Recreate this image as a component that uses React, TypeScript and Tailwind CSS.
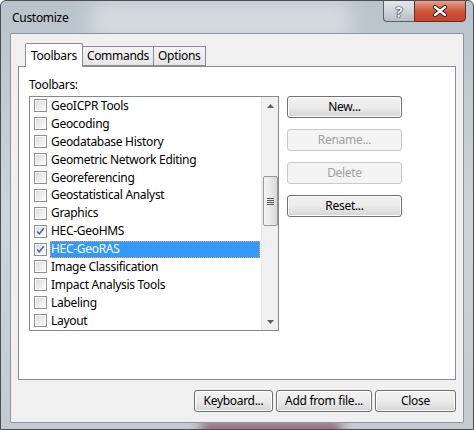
import React from 'react';

const FONT = { fontFamily: '"Noto Sans", "Open Sans", sans-serif' };

const items: { label: string; checked?: boolean; selected?: boolean }[] = [
  { label: 'GeoICPR Tools' },
  { label: 'Geocoding' },
  { label: 'Geodatabase History' },
  { label: 'Geometric Network Editing' },
  { label: 'Georeferencing' },
  { label: 'Geostatistical Analyst' },
  { label: 'Graphics' },
  { label: 'HEC-GeoHMS', checked: true },
  { label: 'HEC-GeoRAS', checked: true, selected: true },
  { label: 'Image Classification' },
  { label: 'Impact Analysis Tools' },
  { label: 'Labeling' },
  { label: 'Layout' },
];

const CheckBox: React.FC<{ checked?: boolean }> = ({ checked }) => (
  <div className="w-[13px] h-[13px] border border-[#8e8f8f] bg-white p-[1px] shrink-0">
    <div className="w-full h-full bg-gradient-to-br from-[#dcdcdc] to-[#fbfbfb] relative">
      {checked && (
        <svg viewBox="0 0 11 11" className="absolute inset-0 w-full h-full">
          <path d="M1.5 5.5 L4 8.5 L9.5 1.5" stroke="#4a5f97" strokeWidth="1.8" fill="none" />
        </svg>
      )}
    </div>
  </div>
);

const Button: React.FC<{ label: string; disabled?: boolean; className?: string }> = ({ label, disabled, className }) => (
  <div
    className={`h-[22px] flex items-center justify-center rounded-[3px] border text-[12px] tracking-[-0.3px] ${
      disabled
        ? 'border-[#c9c9c9] bg-[#f4f4f4] text-[#a0a0a0]'
        : 'border-[#707070] bg-gradient-to-b from-[#f2f2f2] via-[#ebebeb] to-[#d5d5d5] text-black shadow-[inset_0_0_0_1px_#fcfcfc]'
    } ${className ?? ''}`}
  >
    {label}
  </div>
);

export default function App() {
  return (
    <div
      className="w-[474px] h-[430px] relative overflow-hidden rounded-t-[6px] border border-[#4a4f55] bg-gradient-to-b from-[#b9c3cc] via-[#cdd4da] to-[#c3cbd2] tracking-[-0.3px]"
      style={FONT}
    >
      {/* glass sheen */}
      <div className="absolute left-[90px] top-0 w-[260px] h-[40px] bg-[#e6eaee] opacity-60 blur-[10px]" />
      <div className="absolute left-[200px] top-[420px] w-[140px] h-[20px] bg-[#8a3a5a] opacity-70 blur-[6px]" />

      {/* title bar */}
      <div className="relative h-[31px] flex items-start justify-between">
        <div className="pl-[11px] pt-[8px] text-[12px] text-black">Customize</div>
        <div className="flex mr-[7px] -mt-px">
          <div className="w-[31px] h-[22px] rounded-bl-[4px] border border-[#5a6068] border-r-0 bg-gradient-to-b from-[#e4e8ec] via-[#cfd5db] to-[#b6bec6] flex items-center justify-center">
            <span className="text-[14px] font-bold text-[#f4f4f4] [text-shadow:0_0_1px_#333,0_0_1px_#333,0_0_2px_#333]">?</span>
          </div>
          <div className="w-[52px] h-[22px] rounded-br-[4px] border border-[#5a3026] bg-gradient-to-b from-[#e8a08c] via-[#d0563c] to-[#c7432b] flex items-center justify-center">
            <svg width="16" height="12" viewBox="0 0 16 12">
              <path d="M3 2 L13 10 M13 2 L3 10" stroke="#3a1a14" strokeWidth="4.2" strokeLinecap="round" />
              <path d="M3 2 L13 10 M13 2 L3 10" stroke="#ffffff" strokeWidth="2.4" strokeLinecap="round" />
            </svg>
          </div>
        </div>
      </div>

      {/* client area */}
      <div className="relative mx-[9px] mt-px h-[390px] border border-[#8d949b] bg-[#f0f0f0] rounded-[1px]">
        <div className="pl-[7px] pt-[9px]">
          {/* tabs */}
          <div className="flex items-end h-[23px] pl-[7px] relative z-10">
            <div className="h-[24px] px-[5px] border border-[#898c95] border-b-0 bg-white flex items-center text-[12px] rounded-t-[2px] -mb-px">
              Toolbars
            </div>
            <div className="h-[20px] px-[4px] border border-[#898c95] border-l-0 bg-gradient-to-b from-[#f4f4f4] to-[#e6e6e6] flex items-center text-[12px]">
              Commands
            </div>
            <div className="h-[20px] px-[4px] border border-[#898c95] border-l-0 bg-gradient-to-b from-[#f4f4f4] to-[#e6e6e6] flex items-center text-[12px]">
              Options
            </div>
          </div>
          {/* tab panel */}
          <div className="w-[438px] h-[314px] border border-[#898c95] bg-white pl-[10px] pt-[10px]">
            <div className="text-[12px] leading-[16px] text-black">Toolbars:</div>
            <div className="flex mt-[3px] gap-[8px]">
              <div className="w-[250px] h-[235px] border border-[#828790] bg-white flex">
                <div className="flex-1 pl-[4px] pt-0">
                  {items.map((it) => (
                    <div key={it.label} className="h-[17.9px] flex items-center gap-[3px]">
                      <CheckBox checked={it.checked} />
                      <div
                        className={`h-[17px] flex items-center px-[1px] text-[12px] whitespace-nowrap ${
                          it.selected
                            ? 'w-[210px] bg-[#3399ff] text-white outline outline-1 outline-dotted outline-[#f0a040] -outline-offset-1'
                            : 'text-black'
                        }`}
                      >
                        {it.label}
                      </div>
                    </div>
                  ))}
                </div>
                {/* scrollbar */}
                <div className="w-[17px] h-full bg-[#f0f0f0] border-l border-[#e8e8e8] flex flex-col items-center">
                  <div className="h-[17px] flex items-center justify-center">
                    <svg width="7" height="4" viewBox="0 0 7 4"><path d="M0 4 L3.5 0 L7 4 Z" fill="#606060" /></svg>
                  </div>
                  <div className="h-[62px]" />
                  <div className="w-[15px] h-[50px] rounded-[2px] border border-[#979797] bg-gradient-to-r from-[#f4f4f4] via-[#e8e8e8] to-[#d8d8d8] flex flex-col items-center justify-center gap-[1px]">
                    <div className="w-[7px] h-[1px] bg-[#555]" />
                    <div className="w-[7px] h-[1px] bg-[#555]" />
                    <div className="w-[7px] h-[1px] bg-[#555]" />
                    <div className="w-[7px] h-[1px] bg-[#555]" />
                  </div>
                  <div className="flex-1" />
                  <div className="h-[17px] flex items-center justify-center">
                    <svg width="7" height="4" viewBox="0 0 7 4"><path d="M0 0 L3.5 4 L7 0 Z" fill="#606060" /></svg>
                  </div>
                </div>
              </div>
              <div className="w-[115px] flex flex-col gap-[11px]">
                <Button label="New..." />
                <Button label="Rename..." disabled />
                <Button label="Delete" disabled />
                <Button label="Reset..." />
              </div>
            </div>
          </div>
          {/* bottom buttons */}
          <div className="flex justify-end gap-[3px] pr-[7px] mt-[10px]">
            <Button label="Keyboard..." className="w-[79px]" />
            <Button label="Add from file..." className="w-[96px]" />
            <Button label="Close" className="w-[81px]" />
          </div>
        </div>
      </div>
    </div>
  );
}
